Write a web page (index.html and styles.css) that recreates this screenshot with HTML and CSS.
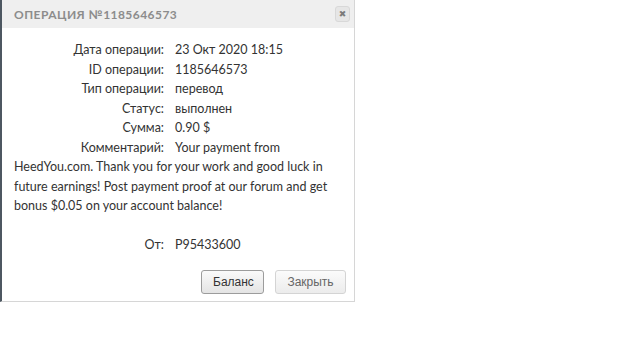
FILE: index.html
```html
<!DOCTYPE html>
<html lang="ru">
<head>
<meta charset="utf-8">
<title>Операция</title>
<link rel="stylesheet" href="styles.css">
</head>
<body>
<div class="dialog">
  <div class="header">
    <span class="title">Операция №1185646573</span>
    <button class="close" type="button">✖</button>
  </div>
  <div class="content">
    <div class="row"><span class="label">Дата операции:</span><span class="value">23 Окт 2020 18:15</span></div>
    <div class="row"><span class="label">ID операции:</span><span class="value">1185646573</span></div>
    <div class="row"><span class="label">Тип операции:</span><span class="value">перевод</span></div>
    <div class="row"><span class="label">Статус:</span><span class="value">выполнен</span></div>
    <div class="row"><span class="label">Сумма:</span><span class="value">0.90 $</span></div>
    <div class="row"><span class="label">Комментарий:</span>Your payment from HeedYou.com. Thank you for your work and good luck in future earnings! Post payment proof at our forum and get bonus $0.05 on your account balance!</div>
    <div class="row from"><span class="label">От:</span><span class="value">P95433600</span></div>
  </div>
  <div class="footer">
    <button class="btn btn-primary" type="button">Баланс</button>
    <button class="btn btn-light" type="button">Закрыть</button>
  </div>
</div>
</body>
</html>
```
FILE: styles.css
```css
html, body {
  margin: 0;
  padding: 0;
  background: #ffffff;
}
body {
  font-family: Lato, "Open Sans", sans-serif;
  color: #333333;
}
.dialog {
  width: 352px;
  height: 301px;
  border-left: 2px solid #4d5761;
  border-right: 1px solid #d6d6d6;
  border-bottom: 1px solid #d6d6d6;
  display: flex;
  flex-direction: column;
}
.header {
  height: 28px;
  background: #efefef;
  display: flex;
  align-items: center;
  justify-content: space-between;
  padding: 0 4px 0 12px;
}
.title {
  text-transform: uppercase;
  font-size: 12px;
  font-weight: 700;
  letter-spacing: 0.45px;
  color: #8c8c8c;
}
.close {
  width: 15px;
  height: 16px;
  padding: 0;
  border: 1px solid #d8d8d8;
  border-radius: 3px;
  background: #e6e6e6;
  color: #7a7a7a;
  font-size: 9px;
  line-height: 14px;
  font-family: "DejaVu Sans", sans-serif;
}
.content {
  padding: 12px 12px 0 12px;
  font-size: 12.5px;
  line-height: 19.5px;
}
.label {
  display: inline-block;
  width: 150px;
  text-align: right;
  margin-right: 11px;
}
.from {
  margin-top: 19px;
}
.footer {
  margin-top: auto;
  display: flex;
  justify-content: flex-end;
  gap: 11px;
  padding: 0 8px 7px 0;
}
.btn {
  height: 24px;
  padding: 0 11px;
  border-radius: 3px;
  font-family: "Liberation Sans", Arial, sans-serif;
  font-size: 12px;
  background: linear-gradient(#fafafa, #e4e4e4);
}
.btn-primary {
  width: 63px;
  border: 1px solid #9c9c9c;
  color: #333333;
}
.btn-light {
  width: 71px;
  border: 1px solid #d4d4d4;
  color: #666666;
  background: linear-gradient(#fbfbfb, #ececec);
}
```
